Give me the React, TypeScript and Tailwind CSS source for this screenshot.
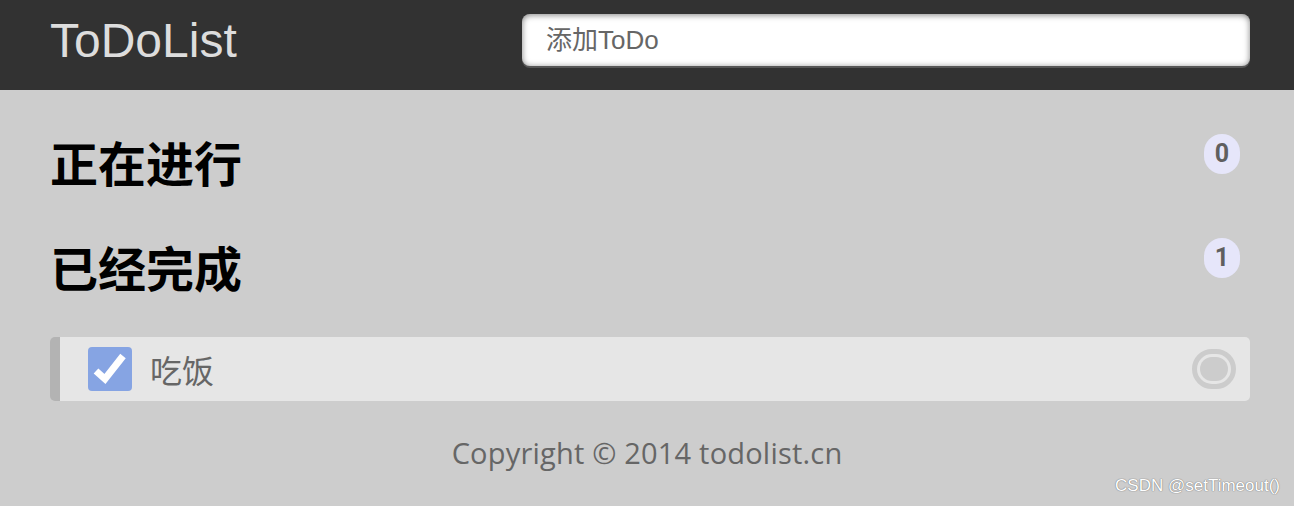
export default function App() {
  return (
    <div className="relative h-[506px] w-[1294px] overflow-hidden bg-[#cdcdcd] font-['Liberation_Sans','Noto_Sans_CJK_SC',sans-serif]">
      <header className="h-[90px] bg-[#323232]">
        <div className="flex h-full w-[1200px] ml-[50px] items-center justify-between">
          <h1 className="text-[48px] leading-none text-[#dddddd] -mt-[8px]">ToDoList</h1>
          <input
            type="text"
            placeholder="添加ToDo"
            className="-mt-[10px] h-[52px] w-[728px] rounded-[8px] border-none border-b-2 bg-white pl-[24px] text-[26px] text-[#333] placeholder:text-[#666] shadow-[inset_0_1px_6px_rgba(0,0,0,0.5),0_2px_0_rgba(90,90,90,0.9)] outline-none"
          />
        </div>
      </header>

      <main className="w-[1200px] ml-[50px] pt-[41px]">
        <section className="flex items-start justify-between">
          <h2 className="text-[48px] leading-[60px] font-bold text-black font-['Noto_Sans_CJK_SC',sans-serif]">正在进行</h2>
          <span className="mr-[10px] mt-[3px] flex h-[40px] w-[36px] items-center justify-center rounded-full bg-[#e6e6fa] text-[25px] font-bold text-[#5f5f5f] font-['Roboto',sans-serif]">
            0
          </span>
        </section>

        <section className="mt-[45px] flex items-start justify-between">
          <h2 className="text-[48px] leading-[60px] font-bold text-black font-['Noto_Sans_CJK_SC',sans-serif]">已经完成</h2>
          <span className="mr-[10px] mt-[2px] flex h-[40px] w-[36px] items-center justify-center rounded-full bg-[#e6e6fa] text-[25px] font-bold text-[#5f5f5f] font-['Roboto',sans-serif]">
            1
          </span>
        </section>

        <ul className="mt-[41px]">
          <li className="flex h-[64px] items-center rounded-[5px] border-l-[10px] border-[#b3b3b3] bg-[#e6e6e6] pl-[28px] pr-[14px]">
            <span className="flex h-[44px] w-[44px] items-center justify-center rounded-[4px] bg-[#86a4e3]">
              <svg width="44" height="44" viewBox="0 0 44 44">
                <path d="M8 24 L17 32 L35 9" fill="none" stroke="#fff" strokeWidth="7" />
              </svg>
            </span>
            <span className="ml-[18px] flex-1 text-[32px] text-[#666] font-['Noto_Sans_CJK_SC',sans-serif]">吃饭</span>
            <span className="flex h-[40px] w-[44px] items-center justify-center rounded-full border-[5px] border-[#cccccc]">
              <span className="h-[24px] w-[28px] rounded-full bg-[#cccccc]" />
            </span>
          </li>
        </ul>
      </main>

      <footer className="mt-[30px] text-center text-[29px] text-[#666] font-['Open_Sans',sans-serif] tracking-[0.2px]">
        Copyright © 2014 todolist.cn
      </footer>

      <span className="absolute right-[14px] bottom-[8px] text-[17px] text-white font-['Liberation_Sans',sans-serif] [text-shadow:0_0_1px_#777,0_0_1px_#777]">
        CSDN @setTimeout()
      </span>
    </div>
  );
}
